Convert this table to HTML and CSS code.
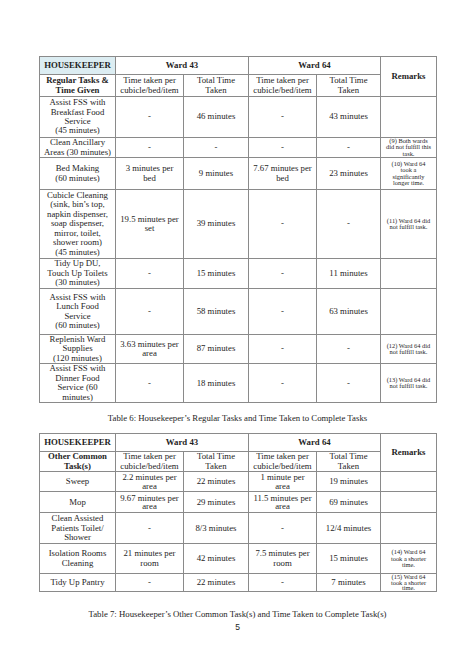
FILE: index.html
```html
<!DOCTYPE html>
<html>
<head>
<meta charset="utf-8">
<link rel="stylesheet" href="styles.css">
</head>
<body>
<div class="page">
  <table class="grid">
    <colgroup>
      <col class="c1"><col class="c2"><col class="c3"><col class="c4"><col class="c5"><col class="c6">
    </colgroup>
    <tr class="h18">
      <th class="hk">HOUSEKEEPER</th>
      <th colspan="2">Ward 43</th>
      <th colspan="2">Ward 64</th>
      <th rowspan="2">Remarks</th>
    </tr>
    <tr class="h22">
      <th>Regular Tasks &amp;<br>Time Given</th>
      <td>Time taken per<br>cubicle/bed/item</td>
      <td>Total Time<br>Taken</td>
      <td>Time taken per<br>cubicle/bed/item</td>
      <td>Total Time<br>Taken</td>
    </tr>
    <tr class="h41">
      <td>Assist FSS with<br>Breakfast Food<br>Service<br>(45 minutes)</td>
      <td>-</td><td>46 minutes</td><td>-</td><td>43 minutes</td><td class="rm"></td>
    </tr>
    <tr class="h20">
      <td>Clean Ancillary<br>Areas (30 minutes)</td>
      <td>-</td><td>-</td><td>-</td><td>-</td>
      <td class="rm">(9) Both wards<br>did not fulfill this<br>task.</td>
    </tr>
    <tr class="h32">
      <td>Bed Making<br>(60 minutes)</td>
      <td>3 minutes per<br>bed</td><td>9 minutes</td><td>7.67 minutes per<br>bed</td><td>23 minutes</td>
      <td class="rm">(10) Ward 64<br>took a<br>significantly<br>longer time.</td>
    </tr>
    <tr class="h69">
      <td>Cubicle Cleaning<br>(sink, bin’s top,<br>napkin dispenser,<br>soap dispenser,<br>mirror, toilet,<br>shower room)<br>(45 minutes)</td>
      <td>19.5 minutes per<br>set</td><td>39 minutes</td><td>-</td><td>-</td>
      <td class="rm">(11) Ward 64 did<br>not fulfill task.</td>
    </tr>
    <tr class="h30">
      <td>Tidy Up DU,<br>Touch Up Toilets<br>(30 minutes)</td>
      <td>-</td><td>15 minutes</td><td>-</td><td>11 minutes</td><td class="rm"></td>
    </tr>
    <tr class="h46">
      <td>Assist FSS with<br>Lunch Food<br>Service<br>(60 minutes)</td>
      <td>-</td><td>58 minutes</td><td>-</td><td>63 minutes</td><td class="rm"></td>
    </tr>
    <tr class="h27">
      <td>Replenish Ward<br>Supplies<br>(120 minutes)</td>
      <td>3.63 minutes per<br>area</td><td>87 minutes</td><td>-</td><td>-</td>
      <td class="rm">(12) Ward 64 did<br>not fulfill task.</td>
    </tr>
    <tr class="h39">
      <td>Assist FSS with<br>Dinner Food<br>Service (60<br>minutes)</td>
      <td>-</td><td>18 minutes</td><td>-</td><td>-</td>
      <td class="rm">(13) Ward 64 did<br>not fulfill task.</td>
    </tr>
  </table>

  <p class="caption cap6">Table 6: Housekeeper’s Regular Tasks and Time Taken to Complete Tasks</p>

  <table class="grid">
    <colgroup>
      <col class="c1"><col class="c2"><col class="c3"><col class="c4"><col class="c5"><col class="c6">
    </colgroup>
    <tr class="h18">
      <th>HOUSEKEEPER</th>
      <th colspan="2">Ward 43</th>
      <th colspan="2">Ward 64</th>
      <th rowspan="2">Remarks</th>
    </tr>
    <tr class="h20">
      <th>Other Common<br>Task(s)</th>
      <td>Time taken per<br>cubicle/bed/item</td>
      <td>Total Time<br>Taken</td>
      <td>Time taken per<br>cubicle/bed/item</td>
      <td>Total Time<br>Taken</td>
    </tr>
    <tr class="h20">
      <td>Sweep</td>
      <td class="tight">2.2 minutes per<br>area</td><td>22 minutes</td><td class="tight">1 minute per<br>area</td><td>19 minutes</td><td class="rm"></td>
    </tr>
    <tr class="h21">
      <td>Mop</td>
      <td class="tight">9.67 minutes per<br>area</td><td>29 minutes</td><td class="tight">11.5 minutes per<br>area</td><td>69 minutes</td><td class="rm"></td>
    </tr>
    <tr class="h31">
      <td>Clean Assisted<br>Patients Toilet/<br>Shower</td>
      <td>-</td><td>8/3 minutes</td><td>-</td><td>12/4 minutes</td><td class="rm"></td>
    </tr>
    <tr class="h30">
      <td>Isolation Rooms<br>Cleaning</td>
      <td>21 minutes per<br>room</td><td>42 minutes</td><td>7.5 minutes per<br>room</td><td>15 minutes</td>
      <td class="rm">(14) Ward 64<br>took a shorter<br>time.</td>
    </tr>
    <tr class="h18">
      <td>Tidy Up Pantry</td>
      <td>-</td><td>22 minutes</td><td>-</td><td>7 minutes</td>
      <td class="rm rmtight">(15) Ward 64<br>took a shorter<br>time.</td>
    </tr>
  </table>

  <p class="caption cap7">Table 7: Housekeeper’s Other Common Task(s) and Time Taken to Complete Task(s)</p>
  <p class="pnum">5</p>
</div>
</body>
</html>
```

FILE: styles.css
```css
html, body {
  margin: 0;
  padding: 0;
  background: #ffffff;
}

.page {
  width: 474px;
  padding: 56px 0 0 39px;
  box-sizing: border-box;
  font-family: "Liberation Serif", "Times New Roman", serif;
  color: #1e1e1e;
}

.grid {
  width: 397px;
  border-collapse: collapse;
  table-layout: fixed;
  border: 1px solid #6a6a6a;
}

.c1 { width: 76px; }
.c2 { width: 68px; }
.c3 { width: 65px; }
.c4 { width: 68px; }
.c5 { width: 64px; }
.c6 { width: 56px; }

.grid th,
.grid td {
  border: 1px solid #8a8a8a;
  padding: 0 1px;
  text-align: center;
  vertical-align: middle;
  font-size: 8.75px;
  line-height: 9.4px;
  white-space: nowrap;
  overflow: hidden;
}

.grid th {
  font-weight: bold;
}

.grid .hk {
  background: #dcedf2;
}

.grid td.tight {
  line-height: 8.6px;
}

.grid td.rm {
  font-size: 6.4px;
  line-height: 6.2px;
}

.grid td.rmtight {
  line-height: 5.5px;
}

.h18 { height: 18px; }
.h20 { height: 20px; }
.h21 { height: 21px; }
.h22 { height: 22px; }
.h27 { height: 27px; }
.h30 { height: 30px; }
.h31 { height: 31px; }
.h32 { height: 32px; }
.h39 { height: 39px; }
.h40 { height: 40px; }
.h41 { height: 41px; }
.h46 { height: 46px; }
.h69 { height: 69px; }

.caption {
  width: 397px;
  margin: 0;
  text-align: center;
  font-size: 8.75px;
  line-height: 10px;
}

.cap6 {
  padding: 10px 0 10px;
}

.cap7 {
  padding: 17px 0 0;
}

.pnum {
  width: 397px;
  margin: 3px 0 0;
  text-align: center;
  font-family: "Liberation Sans", Arial, sans-serif;
  font-size: 8.5px;
  line-height: 10px;
}
```
